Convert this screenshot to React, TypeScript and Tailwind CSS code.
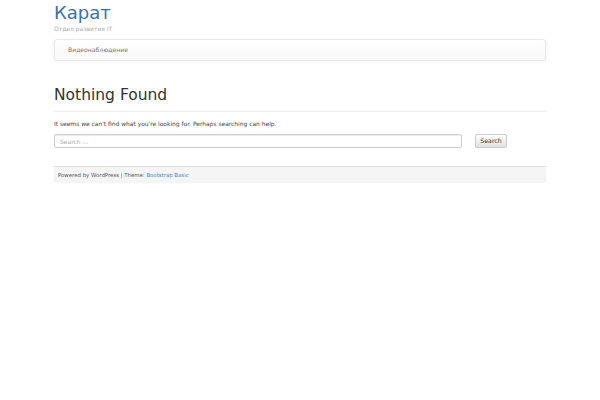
export default function App() {
  return (
    <div className="min-h-[400px] w-[600px] bg-white font-['DejaVu_Sans',sans-serif] text-[#333]">
      <div className="mx-auto w-[492px]">
        <header className="pt-[3px]">
          <div className="text-[18px] leading-[20px] text-[#3a72a8]">Карат</div>
          <div className="mt-[1px] text-[6px] leading-[10px] text-[#aaa]">Отдел развития IT</div>
        </header>

        <nav className="mt-[5px] flex h-[22px] items-center rounded-[3px] border border-[#e7e7e7] bg-gradient-to-b from-white to-[#f8f8f8] px-[13px] shadow-[0_1px_3px_rgba(0,0,0,0.06)]">
          <span className="text-[6.1px] text-[#777]">Видеонаблюдение</span>
        </nav>

        <main className="pt-[25px]">
          <h1 className="text-[15.5px] leading-[18px] text-[#333]">Nothing Found</h1>
          <div className="mt-[7px] border-t border-[#eee]" />
          <p className="mt-[7px] text-[5.95px] leading-[10px] text-[#444]">
            It seems we can't find what you're looking for. Perhaps searching can help.
          </p>
          <form className="mt-[5px] flex items-center gap-[13px]">
            <input
              placeholder="Search …"
              className="h-[14px] w-[408px] rounded-[2px] border border-[#ccc] px-[5px] text-[6px] text-[#555] shadow-[inset_0_1px_1px_rgba(0,0,0,0.075)] outline-none placeholder:text-[#aaa]"
            />
            <button
              type="button"
              className="h-[14px] w-[32px] rounded-[2px] border border-[#ccc] bg-gradient-to-b from-white to-[#e0e0e0] text-[6.2px] text-[#333]"
            >
              Search
            </button>
          </form>
        </main>

        <footer className="mt-[18px] flex h-[17px] items-center border-t border-[#ddd] bg-[#f5f5f5] px-[4px] text-[5.4px] text-[#555]">
          Powered by WordPress | Theme:&nbsp;<span className="text-[#428bca]">Bootstrap Basic</span>
        </footer>
      </div>
    </div>
  );
}
